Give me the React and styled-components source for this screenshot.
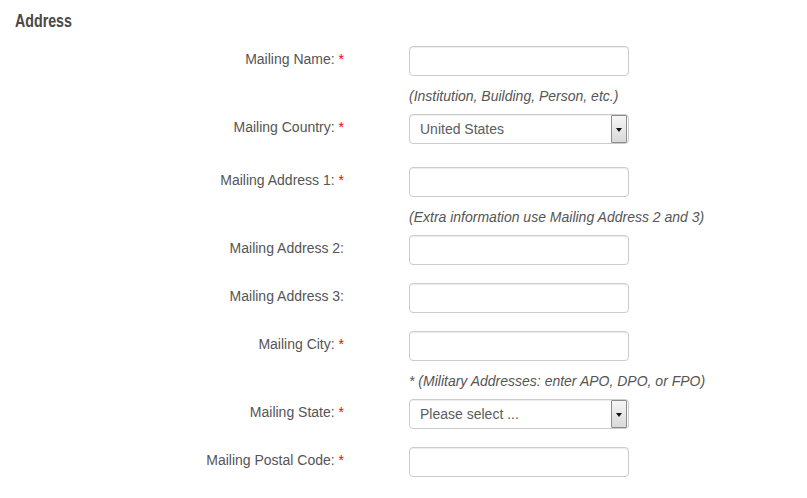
import React from 'react'
import styled, { createGlobalStyle } from 'styled-components'

const GlobalStyle = createGlobalStyle`
body{
    margin:0;
    background:#fff;
    font-family:"Liberation Sans", Arial, sans-serif;
}
`

const Page = styled.div`
padding:11px 15px 20px 15px;
`

const Heading = styled.h3`
margin:0 0 15px 0;
font-family:"Liberation Sans", Arial, sans-serif;
font-weight:700;
font-size:18px;
line-height:20px;
color:#4b4845;
span{
    display:inline-block;
    transform:scaleX(0.79);
    transform-origin:left center;
}
`

const FormRow = styled.div`
display:grid;
grid-template-columns:329px 1fr;
column-gap:65px;
margin-bottom:${p => p.$gap}px;
`

const Label = styled.label`
padding-top:3px;
text-align:right;
font-size:14px;
line-height:20px;
color:#555;
`

const Required = styled.span`
color:#f00;
`

const Control = styled.div`
display:flex;
flex-direction:column;
align-items:flex-start;
`

const TextInput = styled.input`
box-sizing:border-box;
width:220px;
height:30px;
border:1px solid #ccc;
border-radius:4px;
box-shadow:inset 0 1px 1px rgba(0,0,0,.075);
padding:0 10px;
font-family:inherit;
font-size:14px;
color:#555;
:focus{
    outline:none;
}
`

const SelectBox = styled.div`
box-sizing:border-box;
width:220px;
height:30px;
border:1px solid #ccc;
border-radius:4px;
box-shadow:inset 0 1px 1px rgba(0,0,0,.075);
display:flex;
align-items:stretch;
padding:0 1px 0 10px;
`

const SelectValue = styled.div`
flex-grow:1;
display:flex;
align-items:center;
font-size:14px;
color:#5c5c5c;
`

const ArrowButton = styled.div`
box-sizing:border-box;
width:16px;
border:1px solid #8c8c8c;
border-radius:1px;
background:linear-gradient(#f6f6f6, #d9d9d9);
display:flex;
align-items:center;
justify-content:center;
`

const Arrow = styled.div`
width:0;
height:0;
border-left:3.5px solid transparent;
border-right:3.5px solid transparent;
border-top:4px solid #111;
margin-top:2px;
`

const Hint = styled.div`
margin:10px 0 8px 0;
font-size:14px;
line-height:20px;
font-style:italic;
color:#555;
white-space:nowrap;
`

function Field({ label, required, select, hint, gap = 18 }) {
    return (
        <FormRow $gap={hint ? 0 : gap}>
            <Label>
                {label}{required && <> <Required>*</Required></>}
            </Label>
            <Control>
                {select ? (
                    <SelectBox>
                        <SelectValue>{select}</SelectValue>
                        <ArrowButton><Arrow /></ArrowButton>
                    </SelectBox>
                ) : (
                    <TextInput type="text" />
                )}
                {hint && <Hint>{hint}</Hint>}
            </Control>
        </FormRow>
    )
}

function App() {
    return (
        <Page>
            <GlobalStyle />
            <Heading><span>Address</span></Heading>
            <Field label="Mailing Name:" required hint="(Institution, Building, Person, etc.)" />
            <Field label="Mailing Country:" required select="United States" gap={23} />
            <Field label="Mailing Address 1:" required hint="(Extra information use Mailing Address 2 and 3)" />
            <Field label="Mailing Address 2:" />
            <Field label="Mailing Address 3:" />
            <Field label="Mailing City:" required hint="* (Military Addresses: enter APO, DPO, or FPO)" />
            <Field label="Mailing State:" required select="Please select ..." />
            <Field label="Mailing Postal Code:" required />
        </Page>
    )
}

export default App
